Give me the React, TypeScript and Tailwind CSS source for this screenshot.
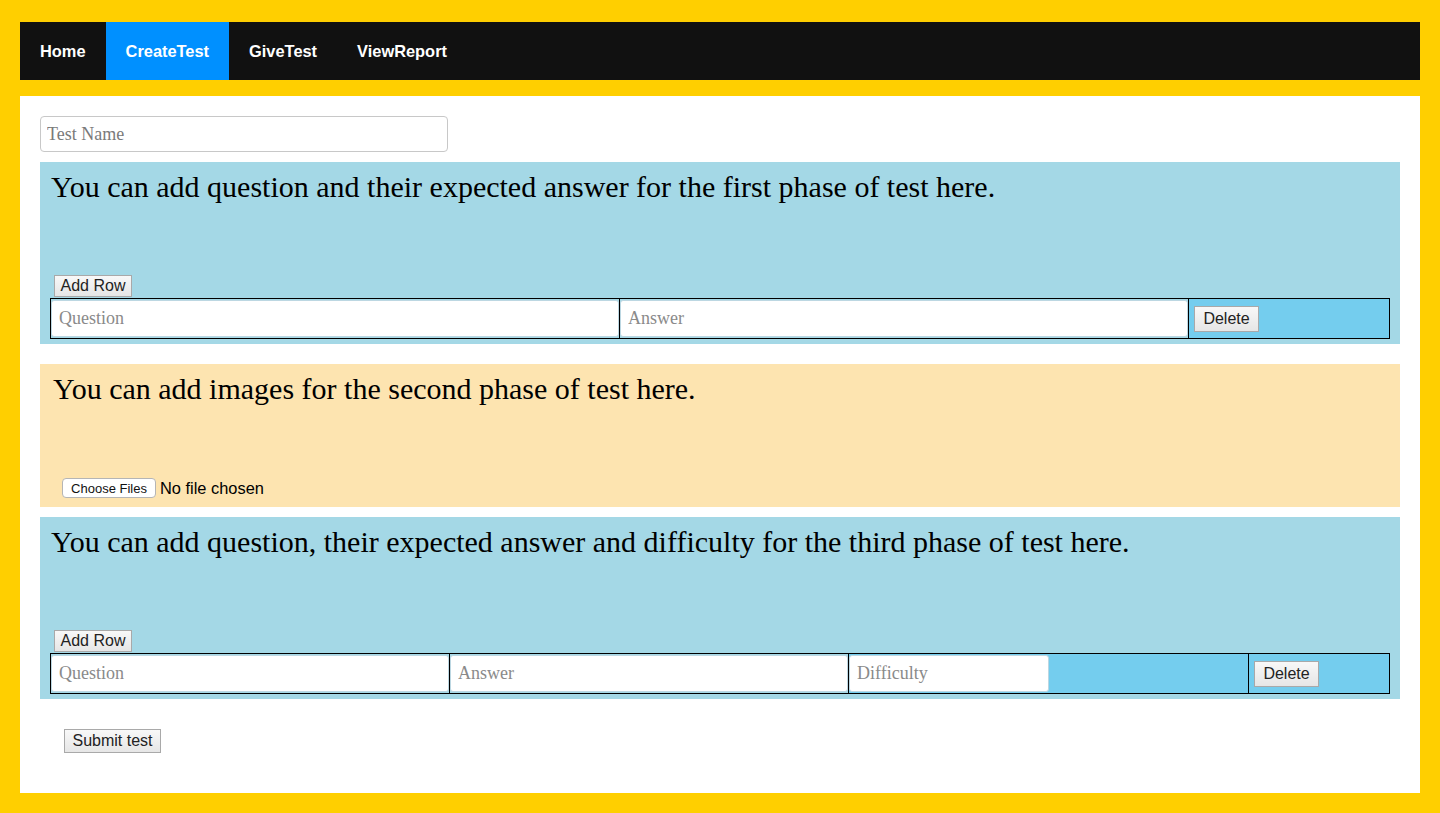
import React from 'react';

const serif = "font-['Liberation_Serif',serif]";
const sans = "font-['Liberation_Sans',Arial,sans-serif]";

const btn =
  "block font-['Liberation_Sans',Arial,sans-serif] text-[16px] leading-none text-[#222] bg-gradient-to-b from-[#f8f8f8] to-[#e6e6e6] border border-[#a9a9a9]";

const cellInput =
  "block font-['Liberation_Serif',serif] w-full h-[37px] bg-white border border-[#bcd7e2] rounded-[3px] px-[7px] text-[18px] placeholder:text-[#8a8a8a] outline-none";

const Nav = () => {
  const items = ['Home', 'CreateTest', 'GiveTest', 'ViewReport'];
  return (
    <nav className="flex h-[58px] bg-[#111111]">
      {items.map(item => (
        <a
          key={item}
          className={`${sans} flex items-center px-[20px] text-[16.4px] font-bold text-white ${
            item === 'CreateTest' ? 'bg-[#0090ff]' : ''
          }`}
        >
          {item}
        </a>
      ))}
    </nav>
  );
};

const Heading = ({ children, indent }: { children: React.ReactNode; indent?: boolean }) => (
  <h2 className={`${serif} text-[30px] leading-[1.15] ${indent ? 'pl-[3px]' : 'pl-px'} text-black`}>
    {children}
  </h2>
);

const App = () => {
  return (
    <div className="h-[813px] bg-[#ffcf00] px-[20px] pt-[22px] pb-[20px]">
      <Nav />

      <main className="mt-[16px] h-[697px] bg-white px-[20px] pt-[20px]">
        <input
          type="text"
          placeholder="Test Name"
          className={`${serif} block w-[408px] h-[36px] border border-[#c8c8c8] rounded-[4px] px-[6px] text-[18px] placeholder:text-[#7a7a7a] outline-none`}
        />

        {/* Phase one */}
        <section className="mt-[10px] flex h-[182px] flex-col bg-[#a4d8e6] px-[10px] pt-[8px]">
          <div className="h-[105px]">
            <Heading>You can add question and their expected answer for the first phase of test here.</Heading>
          </div>
          <button className={`${btn} ml-[4px] h-[22px] w-[78px]`}>Add Row</button>
          <table className="mt-[1px] w-[1340px] border-collapse border border-black table-fixed">
            <tbody>
              <tr className="h-[40px]">
                <td className="w-[569px] border border-black p-0">
                  <input placeholder="Question" className={cellInput} />
                </td>
                <td className="w-[569px] border border-black p-0">
                  <input placeholder="Answer" className={cellInput} />
                </td>
                <td className="border border-black bg-[#74cdee] px-[5px]">
                  <button className={`${btn} h-[26px] w-[65px]`}>Delete</button>
                </td>
              </tr>
            </tbody>
          </table>
        </section>

        {/* Phase two */}
        <section className="mt-[20px] flex h-[143px] flex-col bg-[#fde4b0] px-[10px] pt-[8px]">
          <div className="h-[106px]">
            <Heading indent>You can add images for the second phase of test here.</Heading>
          </div>
          <div className={`${sans} ml-[12px] flex items-center gap-[4px] text-[16.4px] leading-none text-black`}>
            <button className="h-[20px] w-[94px] rounded-[4px] border border-[#b5b5b5] bg-white text-[13px] leading-none text-[#111]">
              Choose Files
            </button>
            <span>No file chosen</span>
          </div>
        </section>

        {/* Phase three */}
        <section className="mt-[10px] flex h-[182px] flex-col bg-[#a4d8e6] px-[10px] pt-[8px]">
          <div className="h-[105px]">
            <Heading>You can add question, their expected answer and difficulty for the third phase of test here.</Heading>
          </div>
          <button className={`${btn} ml-[4px] h-[22px] w-[78px]`}>Add Row</button>
          <table className="mt-[1px] w-[1340px] border-collapse border border-black table-fixed">
            <tbody>
              <tr className="h-[40px]">
                <td className="w-[399px] border border-black p-0">
                  <input placeholder="Question" className={cellInput} />
                </td>
                <td className="w-[399px] border border-black p-0">
                  <input placeholder="Answer" className={cellInput} />
                </td>
                <td className="w-[400px] border border-black bg-[#74cdee] p-0">
                  <input placeholder="Difficulty" className={`${cellInput} !w-[200px]`} />
                </td>
                <td className="border border-black bg-[#74cdee] px-[5px]">
                  <button className={`${btn} h-[26px] w-[65px]`}>Delete</button>
                </td>
              </tr>
            </tbody>
          </table>
        </section>

        <button className={`${btn} mt-[30px] ml-[24px] h-[24px] w-[97px]`}>Submit test</button>
      </main>
    </div>
  );
};

export default App;
